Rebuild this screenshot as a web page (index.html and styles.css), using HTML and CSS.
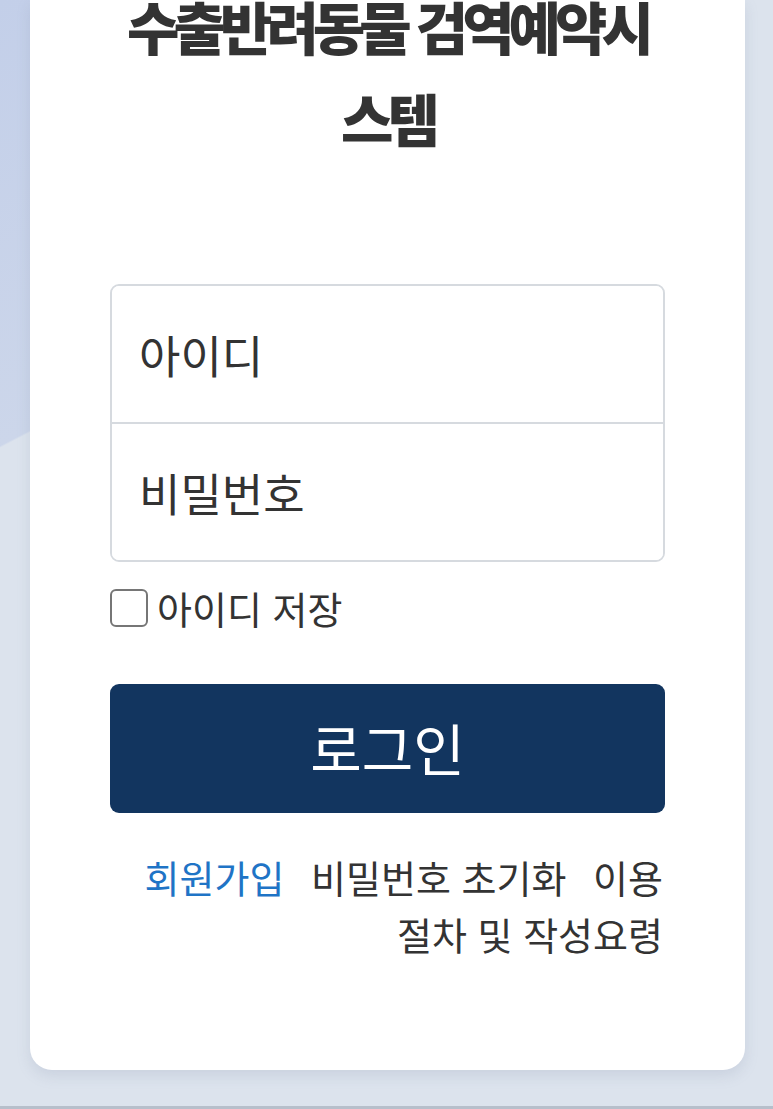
FILE: index.html
```html
<!DOCTYPE html>
<html lang="ko">
<head>
<meta charset="utf-8">
<title>수출반려동물 검역예약시스템</title>
<link rel="stylesheet" href="styles.css">
</head>
<body>
<div class="page">
  <main class="card">
    <h1 class="title">수출반려동물 검역예약시스템</h1>
    <form class="login">
      <div class="fields">
        <input class="field" type="text" placeholder="아이디">
        <input class="field" type="password" placeholder="비밀번호">
      </div>
      <label class="remember"><input class="check" type="checkbox"><span>아이디 저장</span></label>
      <button class="btn" type="button">로그인</button>
      <nav class="links"><a class="link link-primary">회원가입</a> <a class="link">비밀번호 초기화</a> <a class="link">이용 절차 및 작성요령</a></nav>
    </form>
  </main>
</div>
</body>
</html>
```
FILE: styles.css
```css
html, body {
  margin: 0;
  padding: 0;
}
body {
  font-family: "Noto Sans CJK KR", "Noto Sans", sans-serif;
  color: #333;
  background-color: #dce3ed;
  background-image: linear-gradient(152.6deg, #c3cfe9 0%, #ccd6ea 59%, rgba(0,0,0,0) 59.3%);
  background-repeat: no-repeat;
  background-size: 300px 600px;
}
.page {
  box-sizing: border-box;
  min-height: 1109px;
  padding: 0 28px 36px 30px;
  border-bottom: 3px solid #b7bfcb;
  display: flex;
  flex-direction: column;
}
.card {
  flex: 1;
  background: #fff;
  border-radius: 0 0 22px 22px;
  padding: 0 80px;
  box-shadow: 0 6px 14px rgba(120, 135, 160, 0.18);
  display: flex;
  flex-direction: column;
}
.title {
  margin: -21px 0 0;
  text-align: center;
  font-size: 57px;
  line-height: 92px;
  font-weight: 900;
  letter-spacing: -6px;
  color: #333;
}
.login {
  margin-top: 121px;
  display: flex;
  flex-direction: column;
}
.fields {
  border: 2px solid #d6dadf;
  border-radius: 9px;
  display: flex;
  flex-direction: column;
  overflow: hidden;
}
.field {
  height: 136px;
  border: 0;
  margin: 0;
  padding: 0 0 0 27px;
  font-family: inherit;
  font-size: 45px;
  color: #333;
  background: #fff;
  outline: none;
}
.field + .field {
  border-top: 2px solid #d6dadf;
}
.field::placeholder {
  color: #333;
  opacity: 1;
}
.remember {
  margin-top: 27px;
  display: flex;
  align-items: center;
  gap: 9px;
  font-size: 38px;
  line-height: 38px;
  color: #333;
}
.check {
  appearance: none;
  -webkit-appearance: none;
  margin: 0;
  width: 38px;
  height: 38px;
  box-sizing: border-box;
  border: 2px solid #767676;
  border-radius: 6px;
  background: #fff;
}
.btn {
  margin-top: 57px;
  height: 129px;
  border: 0;
  border-radius: 9px;
  background: #12355f;
  color: #fff;
  font-family: inherit;
  font-size: 56px;
  font-weight: 400;
  padding-bottom: 6px;
}
.links {
  margin-top: 35px;
  text-align: right;
  font-size: 38px;
  line-height: 57px;
  word-break: keep-all;
  padding-right: 2px;
}
.link {
  color: #333;
  text-decoration: none;
  margin-left: 16px;
}
.link-primary {
  color: #1f74c6;
}
```
